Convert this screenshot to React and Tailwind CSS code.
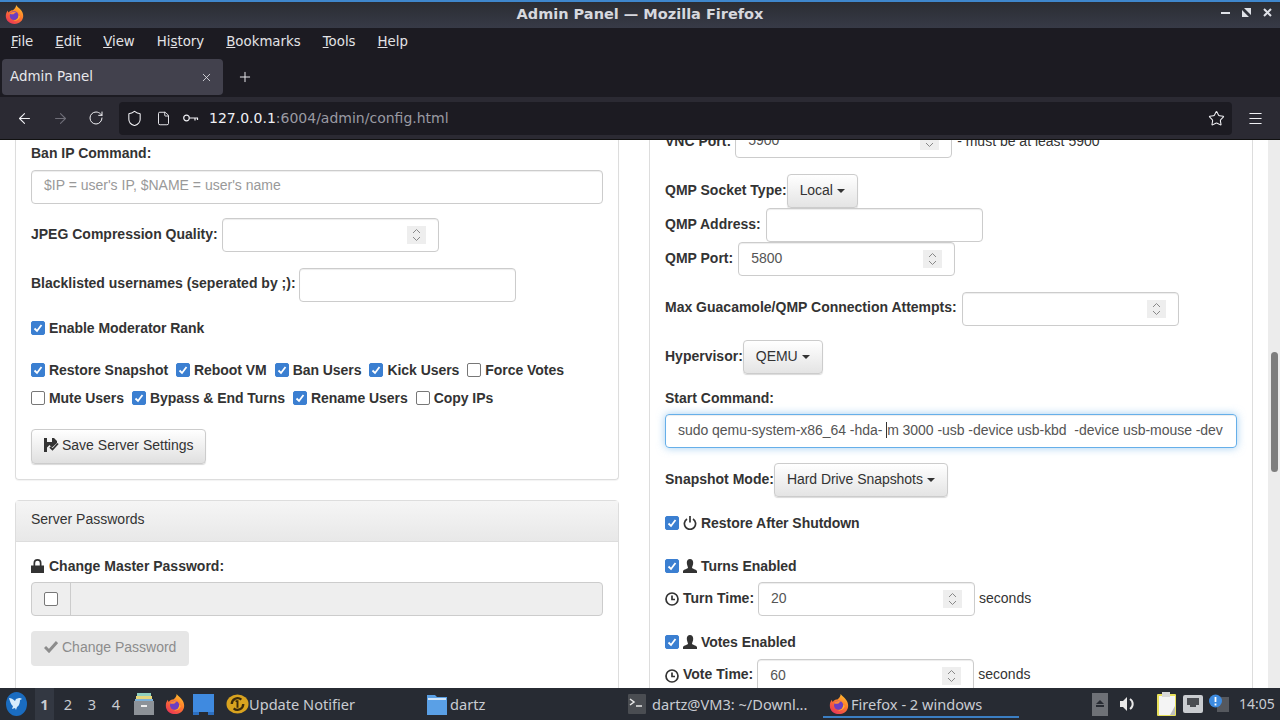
import { ArrowLeft, ArrowRight, RotateCw, Shield, File, Star, Menu, X, Plus } from 'lucide-react';

const Firefox = ({ size = 20 }) => (
  <svg width={size} height={size} viewBox="0 0 24 24">
    <defs>
      <linearGradient id="ffBody" x1="0.8" y1="0" x2="0.2" y2="1">
        <stop offset="0" stopColor="#ffc52e" />
        <stop offset="0.45" stopColor="#ff7a2b" />
        <stop offset="1" stopColor="#e8315a" />
      </linearGradient>
    </defs>
    <path d="M14 0c1 2 3 3 5 5 3 3 4 6 4 9 0 5.500-4.500 10-11 10S1 19.500 1 14c0-3 1-5 2.500-7 0 1 .5 2 1 2.500C6 7 8 6.500 10 6.500c2-1.500 4-3.500 4-6.500z" fill="url(#ffBody)" />
    <circle cx="11.500" cy="13.500" r="5.500" fill="#6d3fc0" />
    <path d="M6 11c2-2.500 6-3.500 9-1.500-1.500 0-3 .5-3.500 2-2 .5-4 .5-5.500-.5z" fill="#ff8a3a" />
    <path d="M17 13c0 4-2.500 6.500-6 6.500 3 1 7-1 8-5z" fill="#ffb02e" />
  </svg>
);

const Updater = () => (
  <svg width="23" height="20" viewBox="0 0 24 20" fill="none">
    <ellipse cx="12" cy="10" rx="11.500" ry="10" fill="#d9a31f" />
    <path d="M6 10a6 6 0 0 1 10-4.500M18 10a6 6 0 0 1-10 4.500" stroke="#3a2a0c" strokeWidth="2.400" />
    <path d="M12 6v8M10 7h3" stroke="#3a2a0c" strokeWidth="2" />
  </svg>
);

const Check = ({ on }) => (
  <span className={`flex w-[14px] h-[14px] shrink-0 items-center justify-center rounded-[2px] border ${on ? 'bg-[#3b7fd1] border-[#3b7fd1]' : 'bg-white border-[#777]'}`}>
    {on && (
      <svg width="12" height="12" viewBox="0 0 12 12" fill="none" stroke="white" strokeWidth="1.8">
        <path d="M2.5 6.5 5 9l4.5-6" />
      </svg>
    )}
  </span>
);

const CheckItem = ({ on, children }) => (
  <span className="flex items-center gap-[4px] font-bold tracking-[-0.05px]">
    <Check on={on} />
    {children}
  </span>
);

const Spinner = () => (
  <span className="flex w-[19px] h-[18px] flex-col items-center justify-center bg-[#eeeeee]">
    <svg width="9" height="14" viewBox="0 0 9 14" fill="none" stroke="#888" strokeWidth="1">
      <path d="M1 5l3.5-3.500L8 5M1 9l3.500 3.500L8 9" />
    </svg>
  </span>
);

const Field = ({ value, width = 'w-[217px]', spin = true }) => (
  <div className={`flex h-[34px] ${width} shrink-0 items-center justify-between rounded-[4px] border border-[#ccc] bg-white pl-[12px] pr-[12px] text-[#555] shadow-[inset_0_1px_1px_rgba(0,0,0,0.075)]`}>
    <span className="pb-[2px]">{value}</span>
    {spin && <Spinner />}
  </div>
);

const Dropdown = ({ label }) => (
  <div className="-ml-[4px] flex h-[34px] items-center gap-[4px] rounded-[4px] border border-[#ccc] bg-gradient-to-b from-white to-[#e4e4e4] px-[12px] text-[#333] shadow-[0_1px_1px_rgba(0,0,0,0.15)]">
    <span className="pb-[2px] tracking-[-0.05px]">{label}</span>
    <svg width="8" height="4" viewBox="0 0 8 4"><path d="M0 0h8L4 4z" fill="#333" /></svg>
  </div>
);

const Row = ({ label, className = '', labelClass = 'pb-[2px]', children }) => (
  <div className={`flex items-center gap-[4px] ${className}`}>
    <span className={`${labelClass} font-bold whitespace-nowrap`}>{label}</span>
    {children}
  </div>
);

const UserIcon = () => (
  <svg width="14" height="14" viewBox="0 0 14 14" fill="#333">
    <path d="M7 0c2 0 3.200 1.500 3.200 3.800S9 8 9 8.800c0 1 4.500 1.700 5 3.200v2H0v-2c.5-1.500 5-2.200 5-3.200C5 8 3.800 6 3.800 3.800S5 0 7 0z" />
  </svg>
);

const ClockIcon = () => (
  <svg width="14" height="14" viewBox="0 0 14 14" fill="none" stroke="#333" strokeWidth="1.700">
    <circle cx="7" cy="7" r="6" />
    <path d="M7 3.500V7.500H10" />
  </svg>
);

const PowerIcon = () => (
  <svg width="14" height="14" viewBox="0 0 14 14" fill="none" stroke="#333" strokeWidth="1.700">
    <path d="M4 3a5.600 5.600 0 1 0 6 0M7 0v6.500" />
  </svg>
);

const LockIcon = () => (
  <svg width="13" height="14" viewBox="0 0 13 14" fill="#333">
    <path d="M0 6.500h13V14H0zM2.500 6.500V4a4 4 0 0 1 8 0v2.500H8.800V4a2.300 2.300 0 0 0-4.600 0v2.500z" />
  </svg>
);

const SaveIcon = () => (
  <svg width="15" height="14" viewBox="0 0 15 14" fill="#333">
    <path d="M0 0h3v4h5V0h2l3 3v2L8 9.500 5.500 7 3 9.500V14H0z" />
    <path d="M6 9l2.500 2.500L14 5.500" fill="none" stroke="#333" strokeWidth="1.800" />
  </svg>
);

const Task = ({ icon, label, active, className = '' }) => (
  <div className={`relative flex h-full shrink-0 items-center whitespace-nowrap ${className}`}>
    {icon}
    <span>{label}</span>
    {active && <span className="absolute bottom-[2px] left-0 right-0 h-[2px] bg-[#3b7fc4]" />}
  </div>
);

const FolderIcon = () => (
  <svg width="20" height="22" viewBox="0 0 20 22">
    <path d="M0 2h8l2 2h10v18H0z" fill="#5aa0e6" />
    <path d="M1 5h18v2H1z" fill="#cfe5fb" />
  </svg>
);

const TermIcon = () => (
  <svg width="18" height="20" viewBox="0 0 18 20">
    <rect width="18" height="20" rx="1" fill="#4a4d52" />
    <path d="M2 5l4 3-4 3" fill="none" stroke="#e8e8e8" strokeWidth="1.500" />
    <path d="M8 12h6" stroke="#e8e8e8" strokeWidth="1.500" />
  </svg>
);

export default function App() {
  return (
    <div className="flex h-[720px] w-[1280px] flex-col overflow-hidden bg-white text-[14px] leading-[20px] text-[#333] font-['Liberation_Sans',sans-serif]">
      {/* window title */}
      <div className="relative flex h-[28px] shrink-0 items-center justify-center border-t-2 border-[#3f87cc] bg-gradient-to-b from-[#2b2d33] to-[#373a47] pb-[2px] font-['DejaVu_Sans',sans-serif] text-[14.500px] font-bold text-[#d6d8de]">
        <span className="absolute left-[5px] top-[3px]"><Firefox size={19} /></span>
        Admin Panel — Mozilla Firefox
        <div className="absolute right-[8px] top-[6px] flex items-center gap-[12px]">
          <svg width="9" height="9" viewBox="0 0 9 9"><path d="M0 4h9v2H0z" fill="#dfe2e8" /></svg>
          <svg width="9" height="9" viewBox="0 0 9 9"><path d="M2 0h7v7zM0 2l7 7H0z" fill="#dfe2e8" /></svg>
          <svg width="9" height="9" viewBox="0 0 9 9"><path d="M1 1l7 7M8 1 1 8" stroke="#dfe2e8" strokeWidth="2" /></svg>
        </div>
      </div>

      {/* menu bar */}
      <div className="flex h-[31px] shrink-0 items-center gap-[22px] bg-[#1c1b22] pb-[4px] pl-[11px] font-['DejaVu_Sans',sans-serif] text-[13.333px] text-[#e3e3e6]">
        <span><u>F</u>ile</span>
        <span><u>E</u>dit</span>
        <span><u>V</u>iew</span>
        <span>Hi<u>s</u>tory</span>
        <span><u>B</u>ookmarks</span>
        <span><u>T</u>ools</span>
        <span><u>H</u>elp</span>
      </div>

      {/* tabs */}
      <div className="flex h-[38px] shrink-0 items-start gap-[14px] bg-[#1c1b22] pl-[2px] font-['DejaVu_Sans',sans-serif] text-[13.400px] text-[#e8e8ec]">
        <div className="flex h-[36px] w-[221px] items-center justify-between rounded-[4px] bg-[#42414d] pl-[8px] pr-[10px]">
          Admin Panel
          <X size={13} strokeWidth={1.500} />
        </div>
        <Plus size={16} strokeWidth={1.500} className="mt-[10px]" />
      </div>

      {/* nav bar */}
      <div className="flex h-[43px] shrink-0 items-center border-b border-[#111] bg-[#2b2a33] pl-[6px] text-[#f0f0f4]">
        <span className="flex w-[36px] justify-center"><ArrowLeft size={17} strokeWidth={1.500} /></span>
        <span className="flex w-[36px] justify-center text-[#6f6e78]"><ArrowRight size={17} strokeWidth={1.500} /></span>
        <span className="flex w-[36px] justify-center"><RotateCw size={16} strokeWidth={1.500} /></span>
        <div className="ml-[5px] flex h-[33px] w-[1113px] items-center rounded-[4px] bg-[#1c1b22] pl-[7px] pr-[7px]">
          <Shield size={17} strokeWidth={1.500} />
          <File size={15} strokeWidth={1.500} className="ml-[13px]" />
          <svg width="16" height="8" viewBox="0 0 16 8" fill="none" stroke="currentColor" strokeWidth="1.200" className="ml-[12px]">
            <circle cx="3.500" cy="4" r="2.800" />
            <path d="M6.500 4H15M12 4v2.500M14.500 4v2" />
          </svg>
          <span className="ml-[10px] font-['DejaVu_Sans',sans-serif] text-[14px]">
            127.0.0.1<span className="text-[#9a9aa2]">:6004/admin/config.html</span>
          </span>
          <Star size={17} strokeWidth={1.500} className="ml-auto" />
        </div>
        <span className="ml-[15px]"><Menu size={17} strokeWidth={1.500} /></span>
      </div>

      {/* page */}
      <div className="flex min-h-0 flex-1">
        <div className="flex min-w-0 flex-1 gap-[30px] overflow-hidden pl-[15px] pr-[15px]">
          {/* left column */}
          <div className="w-[604px] shrink-0">
            <div className="rounded-b-[4px] border border-t-0 border-[#ddd] px-[15px] pb-[15px] pt-[3px] shadow-[0_1px_1px_rgba(0,0,0,0.05)]">
              <div className="font-bold">Ban IP Command:</div>
              <div className="mt-[7px] flex h-[34px] items-center rounded-[4px] border border-[#ccc] px-[12px] pb-[4px] text-[#999] shadow-[inset_0_1px_1px_rgba(0,0,0,0.075)]">
                $IP = user's IP, $NAME = user's name
              </div>
              <Row label="JPEG Compression Quality:" className="mt-[14px]"><Field /></Row>
              <Row label="Blacklisted usernames (seperated by ;):" labelClass="pb-[4px]" className="mt-[16px] !gap-[3px]"><Field spin={false} /></Row>
              <div className="mt-[16px] flex"><CheckItem on>Enable Moderator Rank</CheckItem></div>
              <div className="mt-[22px] flex gap-[8px]">
                <CheckItem on>Restore Snapshot</CheckItem>
                <CheckItem on>Reboot VM</CheckItem>
                <CheckItem on>Ban Users</CheckItem>
                <CheckItem on>Kick Users</CheckItem>
                <CheckItem>Force Votes</CheckItem>
              </div>
              <div className="mt-[8px] flex gap-[8px]">
                <CheckItem>Mute Users</CheckItem>
                <CheckItem on>Bypass &amp; End Turns</CheckItem>
                <CheckItem on>Rename Users</CheckItem>
                <CheckItem>Copy IPs</CheckItem>
              </div>
              <div className="mt-[21px] flex h-[35px] w-[175px] items-center gap-[3px] rounded-[4px] border border-[#ccc] bg-gradient-to-b from-white to-[#e0e0e0] pb-[4px] pl-[12px] shadow-[0_1px_1px_rgba(0,0,0,0.15)]">
                <SaveIcon />
                Save Server Settings
              </div>
            </div>

            <div className="mt-[20px] rounded-[4px] border border-[#ddd]">
              <div className="flex h-[41px] items-center border-b border-[#ddd] bg-gradient-to-b from-[#f5f5f5] to-[#e8e8e8] pb-[5px] pl-[15px]">Server Passwords</div>
              <div className="px-[15px] pb-[20px] pt-[14px]">
                <div className="flex items-center gap-[5px] font-bold"><LockIcon />Change Master Password:</div>
                <div className="mt-[6px] flex h-[34px] rounded-[4px] border border-[#ccc] bg-[#eeeeee]">
                  <div className="flex w-[39px] items-center justify-center border-r border-[#ccc]">
                    <Check />
                  </div>
                </div>
                <div className="mt-[15px] flex h-[35px] w-[158px] items-center gap-[4px] rounded-[4px] bg-[#e6e6e6] pb-[4px] pl-[13px] text-[#8c8c8c]">
                  <svg width="14" height="12" viewBox="0 0 14 12" fill="none" stroke="#8c8c8c" strokeWidth="3"><path d="M1 6l4 4 8-9" /></svg>
                  Change Password
                </div>
                <div className="mt-[21px] flex items-center gap-[5px] font-bold"><LockIcon />Change Moderator Password:</div>
              </div>
            </div>
          </div>

          {/* right column */}
          <div className="w-[604px] shrink-0">
            <div className="-mt-[16px] border-x border-[#ddd] px-[15px] pb-[40px]">
              <Row label="VNC Port:" labelClass="pb-0">
                <Field value="5900" />
                <span className="ml-[1px]">- must be at least 5900</span>
              </Row>
              <Row label="QMP Socket Type:" className="mt-[16px]"><Dropdown label="Local" /></Row>
              <Row label="QMP Address:" className="!gap-[5px]"><Field spin={false} /></Row>
              <Row label="QMP Port:" className="!gap-[5px]"><Field value="5800" /></Row>
              <Row label="Max Guacamole/QMP Connection Attempts:" labelClass="pb-[4px]" className="mt-[16px] !gap-[5px]"><Field /></Row>
              <Row label="Hypervisor:" className="mt-[14px]"><Dropdown label="QEMU" /></Row>
              <div className="mt-[14px] font-bold">Start Command:</div>
              <div className="mt-[6px] flex h-[34px] items-center overflow-hidden rounded-[4px] border border-[#66afe9] pb-[2px] pl-[12px] tracking-[-0.04px] whitespace-pre text-[#555] shadow-[inset_0_1px_1px_rgba(0,0,0,0.075),0_0_8px_rgba(102,175,233,0.6)]">
                sudo qemu-system-x86_64 -hda- <span className="inline-block h-[16px] w-px bg-[#333]" />m 3000 -usb -device usb-kbd  -device usb-mouse -dev
              </div>
              <Row label="Snapshot Mode:" className="mt-[15px]"><Dropdown label="Hard Drive Snapshots" /></Row>
              <div className="mt-[16px] flex"><CheckItem on><PowerIcon />Restore After Shutdown</CheckItem></div>
              <div className="mt-[23px] flex"><CheckItem on><UserIcon />Turns Enabled</CheckItem></div>
              <div className="mt-[6px] flex items-center gap-[4px]">
                <ClockIcon />
                <span className="pb-[2px] font-bold">Turn Time:</span>
                <Field value="20" />
                <span className="pb-[2px]">seconds</span>
              </div>
              <div className="mt-[16px] flex"><CheckItem on><UserIcon />Votes Enabled</CheckItem></div>
              <div className="mt-[7px] flex items-center gap-[4px]">
                <ClockIcon />
                <span className="pb-[4px] font-bold">Vote Time:</span>
                <Field value="60" />
                <span className="pb-[4px]">seconds</span>
              </div>
            </div>
          </div>
        </div>

        {/* scrollbar */}
        <div className="w-[12px] shrink-0 bg-[#ececec] pl-[3px] pt-[212px]">
          <div className="h-[120px] w-[7px] rounded-full bg-[#7e7e7e]" />
        </div>
      </div>

      {/* taskbar */}
      <div className="flex h-[32px] shrink-0 items-center bg-[#272b33] font-['Noto_Sans',sans-serif] text-[14.600px] text-[#c9ccd2]">
        <div className="flex w-[33px] shrink-0 justify-center">
          <svg width="21" height="24" viewBox="0 0 21 24">
            <ellipse cx="10.500" cy="12" rx="10.500" ry="12" fill="#1a6cc0" />
            <path d="M3 6c2 0 4 1 6 3l1-2 3-1c1 0 2 0 3 1l-2 1c0 3-1 6-3 7l-1 3-1-2-3 1 1-3C5 13 4 9 3 6z" fill="#d7ecfb" />
          </svg>
        </div>
        <div className="flex w-[95px] shrink-0 items-center text-center">
          <span className="ml-[2px] mr-[1px] flex h-[32px] w-[19px] items-center justify-center bg-[#333842] font-bold">1</span>
          <span className="ml-[1px] w-[24px]">2</span>
          <span className="w-[24px]">3</span>
          <span className="w-[24px]">4</span>
        </div>
        <div className="flex w-[98px] shrink-0 items-center">
          <svg width="20" height="22" viewBox="0 0 20 22" className="ml-[6px]">
            <rect x="3" y="0" width="14" height="3" fill="#8fd0c0" />
            <rect x="2" y="3" width="16" height="3" fill="#e6d67c" />
            <rect x="1" y="6" width="18" height="2" fill="#7cb0d8" />
            <rect y="8" width="20" height="14" fill="#8d9298" />
            <rect x="7" y="12" width="6" height="2" fill="#eee" />
          </svg>
          <span className="ml-[11px]"><Firefox size={20} /></span>
          <svg width="21" height="21" viewBox="0 0 21 21" className="ml-[8px]">
            <rect width="21" height="18" fill="#3f8ae0" />
            <rect x="0" y="18" width="6" height="3" fill="#2d6fc0" />
            <rect x="15" y="18" width="6" height="3" fill="#2d6fc0" />
          </svg>
        </div>
        <Task icon={<Updater />} label="Update Notifier" className="w-[197px]" />
        <Task icon={<FolderIcon />} label="dartz" className="w-[200px] gap-[3px] pl-[4px]" />
        <Task icon={<TermIcon />} label="dartz@VM3: ~/Downl..." className="w-[200px] gap-[6px] pl-[5px]" />
        <Task icon={<Firefox size={20} />} label="Firefox - 2 windows" active className="w-[196px] gap-[2px] pl-[6px]" />
        <div className="ml-auto flex items-center pr-[5px]">
          <span className="flex h-[23px] w-[16px] items-start justify-center bg-[#6e7177] pt-[7px]">
            <svg width="8" height="7" viewBox="0 0 8 7"><path d="M4 0l4 4H0zM0 5h8v2H0z" fill="#272b33" /></svg>
          </span>
          <svg width="16" height="16" viewBox="0 0 16 16" className="ml-[12px]">
            <path d="M0 5h3l4-4v14l-4-4H0z" fill="#e8e8e8" />
            <path d="M10 3a6 6 0 0 1 0 10" fill="none" stroke="#e8e8e8" strokeWidth="2" />
          </svg>
          <svg width="19" height="24" viewBox="0 0 19 24" className="ml-[21px]">
            <rect y="2" width="19" height="22" rx="1" fill="#e8e05a" />
            <rect x="2" y="4" width="16" height="19" fill="#f4f4f4" />
            <rect x="5" y="0" width="8" height="5" fill="#d8d8d8" />
            <path d="M18 14l-5 9h5z" fill="#bdbdbd" />
          </svg>
          <svg width="20" height="18" viewBox="0 0 20 18" className="ml-[7px]">
            <rect width="20" height="18" rx="2" fill="#c9ccd0" />
            <path d="M4 3h12v7h-3v2H7v-2H4z" fill="#4a4d52" />
          </svg>
          <svg width="20" height="20" viewBox="0 0 20 20" className="ml-[6px]">
            <rect x="8" y="3" width="12" height="15" fill="#55585e" />
            <circle cx="6.500" cy="7" r="6.500" fill="#3d8be0" />
            <path d="M6.500 3v5M6.500 9.500v2" stroke="white" strokeWidth="1.800" />
          </svg>
          <span className="ml-[10px] w-[36px] text-[14px]">14:05</span>
        </div>
      </div>
    </div>
  );
}
